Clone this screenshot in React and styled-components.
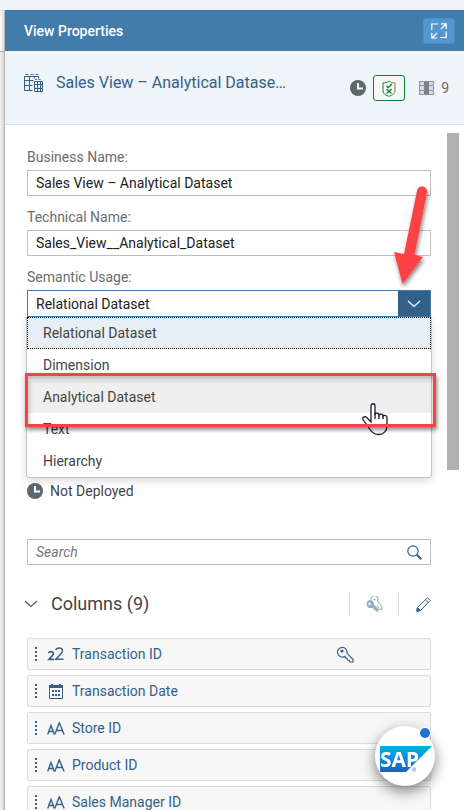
import React from 'react';
import styled, { createGlobalStyle } from 'styled-components';

const GlobalStyle = createGlobalStyle`
  *, *::before, *::after { box-sizing: border-box; }
  body {
    margin: 0;
    background: #eff4f9;
    color: #333;
    font-family: Roboto, "Liberation Sans", sans-serif;
    font-size: 14px;
    line-height: 20px;
  }
  button, input, select { font: inherit; }
  svg { display: block; flex: none; }
`;

const Page = styled.div`
  display: flex;
  height: 100vh;
  padding-top: 10px;
  overflow: hidden;
`;

const CanvasEdge = styled.div`
  flex: 0 0 5px;
  display: flex;
  flex-direction: column;
  background: linear-gradient(to right, #f2f2f2, #d6d6d6);
  border-top: 1px solid #cfe0ee;
  border-right: 1px solid #b4b4b4;
`;

const CanvasToolbar = styled.div`
  height: 41px;
  background: linear-gradient(to right, #fff, #dedede);
  border-bottom: 1px solid #aaa;
`;

const Panel = styled.aside`
  flex: 1;
  min-width: 0;
  display: flex;
  flex-direction: column;
  background: #fff;
`;

const PanelBar = styled.header`
  flex: none;
  display: flex;
  align-items: center;
  justify-content: space-between;
  height: 41px;
  padding: 0 9px 0 19px;
  background: #427cac;
  border-top: 1px solid #3f75a3;
`;

const PanelTitle = styled.h1`
  margin: 0;
  color: #fff;
  font-size: 14px;
  font-weight: 500;
`;

const ExpandButton = styled.button`
  display: grid;
  place-items: center;
  width: 32px;
  height: 26px;
  padding: 0;
  border: 1px solid #4a90cf;
  border-radius: 3px;
  background: #5496cd;
  color: #fff;
`;

const ObjectHeader = styled.section`
  flex: none;
  display: flex;
  align-items: flex-start;
  height: 74px;
  padding: 20px 15px 0 19px;
  background: #eff4f9;
  border-bottom: 1px solid #cfe0ee;
`;

const ObjectTitle = styled.h2`
  flex: 1;
  margin: 0 0 0 13px;
  color: #346187;
  font-size: 16px;
  font-weight: 400;
  line-height: 24px;
  white-space: nowrap;
`;

const ObjectIcon = styled.span`
  padding-top: 3px;
`;

const ObjectMeta = styled.div`
  display: flex;
  align-items: center;
  gap: 7px;
  margin-top: 4px;
`;

const ValidationButton = styled.button`
  display: grid;
  place-items: center;
  width: 32px;
  height: 26px;
  padding: 0;
  border: 1px solid #107e3e;
  border-radius: 3px;
  background: #f7f7f7;
`;

const ColumnCount = styled.span`
  display: flex;
  align-items: center;
  gap: 7px;
  margin-left: 7px;
  color: #6a6d70;
`;

const Body = styled.div`
  flex: 1;
  min-height: 0;
  display: flex;
  padding-right: 5px;
`;

const Content = styled.div`
  flex: 1;
  min-width: 0;
  padding: 22px 16px 0 22px;
`;

const ScrollTrack = styled.div`
  flex: 0 0 12px;
  padding-top: 8px;
`;

const ScrollThumb = styled.div`
  height: 337px;
  background: #b1b1b1;
`;

const Form = styled.form`
  display: flex;
  flex-direction: column;
  gap: 11px;
`;

const Field = styled.div`
  display: flex;
  flex-direction: column;
  gap: 3px;
`;

const Label = styled.label`
  color: #6a6d70;
`;

const TextInput = styled.input`
  width: 100%;
  height: 26px;
  padding: 0 8px;
  border: 1px solid #bfbfbf;
  border-radius: 0;
  background: #fff;
  color: #222;
  outline: none;
  &::placeholder { color: #74777a; font-style: italic; opacity: 1; }
  &::-webkit-search-cancel-button { display: none; }
`;

const SelectBox = styled.div`
  position: relative;
  display: flex;
  height: 27px;
`;

const Select = styled.select`
  appearance: none;
  width: 100%;
  padding: 0 40px 0 8px;
  border: 1px solid #427cac;
  border-radius: 0;
  background: #fff;
  color: #222;
  outline: none;
`;

const SelectArrow = styled.span`
  position: absolute;
  inset: 1px 1px 1px auto;
  display: grid;
  place-items: center;
  width: 32px;
  background: #346187;
  color: #fff;
  pointer-events: none;
`;

const Options = styled.ul`
  position: absolute;
  z-index: 1;
  top: 100%;
  left: -1px;
  right: -1px;
  margin: 0;
  padding: 0;
  list-style: none;
  background: #fff;
  border: 1px solid #c3c3c3;
  border-top: 0;
  border-radius: 0 0 4px 4px;
  box-shadow: 0 3px 8px rgba(0, 0, 0, 0.14);
`;

const Option = styled.li`
  height: 32px;
  padding: 5px 15px;
  border: 1px ${(p) => (p.$selected ? 'dotted #000' : 'solid transparent')};
  background: ${(p) => (p.$selected ? '#e6eef6' : p.$hover ? '#efefef' : 'transparent')};
  color: #444;
`;

const Highlight = styled.div`
  position: absolute;
  z-index: 3;
  top: 83px;
  left: -2px;
  right: -5px;
  height: 54px;
  border: 3px solid #fd4245;
  box-shadow: 1px 3px 4px rgba(0, 0, 0, 0.45), inset 1px 4px 4px rgba(0, 0, 0, 0.25);
`;

const Pointer = styled.span`
  position: absolute;
  z-index: 2;
  top: 112px;
  right: 43px;
`;

const Arrow = styled.span`
  position: absolute;
  z-index: 3;
  top: -106px;
  right: -4px;
  pointer-events: none;
`;

const Status = styled.div`
  display: flex;
  align-items: center;
  gap: 7px;
  margin-top: 164px;
  color: #444;
`;

const SearchBox = styled.form`
  display: flex;
  align-items: center;
  height: 26px;
  margin-top: 38px;
  border: 1px solid #bfbfbf;
`;

const SearchInput = styled(TextInput)`
  flex: 1;
  height: 24px;
  border: 0;
`;

const IconButton = styled.button`
  display: grid;
  place-items: center;
  flex: none;
  width: ${(p) => p.$width || 32}px;
  height: 24px;
  padding: 0;
  border: 0;
  background: transparent;
  color: #346187;
  &:disabled { opacity: 0.5; }
`;

const SectionHeader = styled.div`
  display: flex;
  align-items: center;
  height: 24px;
  margin: 27px 0 22px -5px;
`;

const SectionTitle = styled.h3`
  flex: 1;
  margin: 0 0 0 11px;
  color: #444;
  font-size: 18px;
  font-weight: 400;
  line-height: 24px;
`;

const Tool = styled.span`
  display: flex;
  justify-content: ${(p) => (p.$last ? 'flex-end' : 'center')};
  width: ${(p) => (p.$last ? 33 : 49)}px;
  border-left: 1px solid #d9d9d9;
`;

const ColumnList = styled.ul`
  display: flex;
  flex-direction: column;
  gap: 5px;
  margin: 0;
  padding: 0;
  list-style: none;
`;

const ColumnRow = styled.li`
  display: flex;
  align-items: center;
  height: 32px;
  padding: 0 76px 0 7px;
  border: 1px solid #dcdcdc;
  border-radius: 2px;
  background: #f7f7f7;
  color: #346187;
`;

const TypeIcon = styled.span`
  display: grid;
  place-items: center;
  width: 20px;
  margin: 0 6px 0 8px;
`;

const ColumnName = styled.span`
  flex: 1;
`;

const Badge = styled.button`
  position: fixed;
  z-index: 5;
  right: 29px;
  bottom: 24px;
  width: 60px;
  height: 60px;
  padding: 0;
  border: 0;
  border-radius: 50%;
  background: #fff;
  box-shadow: 0 5px 14px rgba(0, 0, 0, 0.5);
`;

const ClockIcon = () => (
  <svg width="16" height="16" viewBox="0 0 16 16" aria-hidden="true">
    <circle cx="8" cy="8" r="8" fill="#5c676e" />
    <path d="M8 3v5.5h5" fill="none" stroke="#fff" strokeWidth="2" />
  </svg>
);

const ChevronDown = () => (
  <svg width="14" height="8" viewBox="0 0 14 8" fill="none" stroke="currentColor" strokeWidth="1.2" aria-hidden="true">
    <path d="M1 1l6 5.5L13 1" />
  </svg>
);

const ExpandIcon = () => (
  <svg width="16" height="16" viewBox="0 0 16 16" fill="none" stroke="currentColor" strokeWidth="1.2" aria-hidden="true">
    <path d="M7 1H.8v6M15.2 8.5v6H9M10 .8h5.2V6M15 1l-5 5M.8 10v5H6M1 15l5-5" />
  </svg>
);

const ViewIcon = () => (
  <svg width="19" height="19" viewBox="0 0 19 19" fill="none" stroke="#346187" aria-hidden="true">
    <path d="M1.5 .5h3M6.5 .5h3M11.5 .5h3" stroke="#5a6f88" />
    <path d="M.5 2.5h14v2M.5 2.5v14h8M5.500 2.500v14M.5 6.500h9M.5 11.500h8M10.500 2.500v2" />
    <path d="M11 5.500h2M14.500 5.500h2" stroke="#5a6f88" />
    <path d="M10.500 7.500h8v10h-8zM13.500 7.500v10M16.500 7.500v10M10.500 10.500h8M10.500 14.500h8" />
  </svg>
);

const ShieldIcon = () => (
  <svg width="14" height="17" viewBox="0 0 14 17" fill="none" stroke="#107e3e" aria-hidden="true">
    <path d="M7 1C5 2.5 3 3 1 3v8c0 3 3.500 4.500 6 5.300" />
    <path d="M7 1c2 1.500 4 2 6 2v8c0 3-3.500 4.500-6 5.300" stroke="#6b8e23" />
    <path d="M4.500 6l1.700 1.500L9.800 4M4.500 9l5 4.500M9.500 9l-5 4.500" strokeWidth="1.300" />
  </svg>
);

const ColumnsIcon = () => (
  <svg width="15" height="14" viewBox="0 0 15 14" aria-hidden="true">
    <path d="M0 0h15v14H0z" fill="#d5dcea" />
    <path d="M5 0h5v14H5z" fill="#808080" />
    <path d="M.5 .5v13M14.500 .5v13M0 .5h15M0 4.500h5M10 4.500h5M0 9.500h5M10 9.500h5M0 13.500h15" stroke="#8e9196" />
  </svg>
);

const SearchIcon = () => (
  <svg width="15" height="15" viewBox="0 0 15 15" fill="none" stroke="currentColor" aria-hidden="true">
    <circle cx="6" cy="6" r="5.200" strokeWidth="1.200" />
    <path d="M9.800 9.800l4.500 4.500" strokeWidth="2" />
  </svg>
);

const KeyIcon = () => (
  <svg width="17" height="17" viewBox="0 0 17 17" fill="none" stroke="currentColor" strokeWidth="1.200" aria-hidden="true">
    <path d="M10 7.200l6 6.300V16h-2.800l-1-1.600-1.700-.3-.4-1.900-1.800-.3-.3-1.700A4.800 4.800 0 1 1 10 7.200z" />
    <circle cx="5" cy="5" r="1.600" fill="currentColor" stroke="none" />
  </svg>
);

const KeysIcon = () => (
  <svg width="17" height="16" viewBox="0 0 17 16" fill="none" stroke="currentColor" aria-hidden="true">
    <path d="M5 3.500A3.500 3.500 0 1 1 11.500 5l4.500 6v2.500h-2l-3-4" strokeWidth="1.100" />
    <circle cx="8.500" cy="3.500" r="1.100" fill="currentColor" stroke="none" />
    <path fill="currentColor" stroke="none" fillRule="evenodd" d="M4 4a4 4 0 0 1 4 4.500l4.500 4.700V15.500h-2.300l-1-1.500-1.500-.2-.5-1.500-1.700-.3A4 4 0 1 1 4 4zM3.500 6.800a1.200 1.200 0 1 0 .1 2.400 1.200 1.200 0 0 0-.1-2.400z" />
  </svg>
);

const PencilIcon = () => (
  <svg width="15" height="15" viewBox="0 0 15 15" fill="none" stroke="currentColor" aria-hidden="true">
    <path d="M1.500 10.500L11.500 .8l2.700 2.700-9.700 10L.8 14.200zM9.500 2.800l2.700 2.700" />
    <path d="M1.500 10.500l3 3-3.700 .7z" fill="currentColor" />
  </svg>
);

const DragHandle = () => (
  <svg width="3" height="14" viewBox="0 0 3 14" fill="currentColor" aria-hidden="true">
    <path d="M0 0h2v2H0zM0 4h2v2H0zM0 8h2v2H0zM0 12h2v2H0z" />
  </svg>
);

const NumberTypeIcon = () => (
  <svg width="18" height="14" viewBox="0 0 18 14" fill="none" stroke="currentColor" aria-hidden="true">
    <path d="M1.500 6q.8-1.300 2.500-1.300c3 0 2.800 2.600 1.300 4L2 12.300h5" strokeWidth="1.700" />
    <path d="M8.500 3q1-2 3.700-2c4 0 4 3.400 2 5.600l-5.400 5.700h7.700" strokeWidth="1.500" />
  </svg>
);

const TextTypeIcon = () => (
  <svg width="18" height="13" viewBox="0 0 18 13" fill="none" stroke="currentColor" strokeWidth="1.400" aria-hidden="true">
    <path d="M.7 12.500L4 3.500l3.300 9M2 9.500h4" />
    <path d="M7.800 12.500L12.300 .8l4.800 11.700M9.500 8.500h6" />
  </svg>
);

const DateTypeIcon = () => (
  <svg width="14" height="15" viewBox="0 0 14 15" aria-hidden="true">
    <path d="M.5 2h13v12.500H.5z" fill="none" stroke="currentColor" />
    <path d="M0 1h2V0h2v1h6V0h2v1h2v3H0zM3 6h2v2H3zM6 6h2v2H6zM9 6h2v2H9zM3 10h2v2H3zM6 10h2v2H6zM9 10h2v2H9z" fill="currentColor" />
  </svg>
);

const HandIcon = () => (
  <svg width="26" height="34" viewBox="0 0 26 34" aria-hidden="true">
    <path
      d="M9 20V4c0-3 4-3 4 0v8c1-1.500 4-1 4 1 1-1.500 4-1 4 1 1-1 4-.5 4 1v9c0 5-3.500 8.500-8.500 8.500-4 0-6.500-2-8.500-5l-7-10c-1-2 1.500-3.500 3.500-2.200z"
      fill="#fff" stroke="#1c1c2e" strokeWidth="1.300"
    />
    <path d="M13 11v6M17 12v5M21 13v4" stroke="#1c1c2e" strokeWidth="1.300" />
  </svg>
);

const RedArrow = () => (
  <svg width="44" height="108" viewBox="0 0 44 108" aria-hidden="true">
    <defs>
      <filter id="arrowShadow" x="-30%" y="-10%" width="170%" height="130%">
        <feDropShadow dx="1" dy="3" stdDeviation="2" floodOpacity="0.5" />
      </filter>
    </defs>
    <path
      d="M26 7a5 5 0 0 1 10 1L23.500 71l8.500 2-20.500 27L3 68l10 2z"
      fill="#fd4245" filter="url(#arrowShadow)"
    />
  </svg>
);

const SapLogo = () => (
  <svg width="60" height="60" viewBox="0 0 60 60" aria-hidden="true">
    <defs>
      <linearGradient id="sapBlue" x1="0" y1="0" x2="0" y2="1">
        <stop offset="0" stopColor="#00b1eb" />
        <stop offset="1" stopColor="#1d61bf" />
      </linearGradient>
    </defs>
    <path d="M5 20h52L31 46H5z" fill="url(#sapBlue)" />
    <text x="5" y="41" fill="#fff" fontFamily="Noto Sans, sans-serif" fontSize="21" fontWeight="700">
      SAP
      <tspan x="37" y="46" fill="#4a7fc4" fontSize="5">®</tspan>
    </text>
    <circle cx="50" cy="7" r="6" fill="#fff" />
    <circle cx="50" cy="7" r="5" fill="#1e74cf" />
  </svg>
);

const usages = ['Relational Dataset', 'Dimension', 'Analytical Dataset', 'Text', 'Hierarchy'];

const columns = [
  { name: 'Transaction ID', Icon: NumberTypeIcon, isKey: true },
  { name: 'Transaction Date', Icon: DateTypeIcon },
  { name: 'Store ID', Icon: TextTypeIcon },
  { name: 'Product ID', Icon: TextTypeIcon },
  { name: 'Sales Manager ID', Icon: TextTypeIcon },
];

export default function App() {
  return (
    <>
      <GlobalStyle />
      <Page>
        <CanvasEdge>
          <CanvasToolbar />
        </CanvasEdge>
        <Panel>
          <PanelBar>
            <PanelTitle>View Properties</PanelTitle>
            <ExpandButton type="button" aria-label="Expand panel">
              <ExpandIcon />
            </ExpandButton>
          </PanelBar>
          <ObjectHeader>
            <ObjectIcon><ViewIcon /></ObjectIcon>
            <ObjectTitle>Sales View – Analytical Datase…</ObjectTitle>
            <ObjectMeta>
              <ClockIcon />
              <ValidationButton type="button" aria-label="Validation status">
                <ShieldIcon />
              </ValidationButton>
              <ColumnCount><ColumnsIcon />9</ColumnCount>
            </ObjectMeta>
          </ObjectHeader>
          <Body>
            <Content>
              <Form>
                <Field>
                  <Label htmlFor="business-name">Business Name:</Label>
                  <TextInput id="business-name" defaultValue="Sales View – Analytical Dataset" />
                </Field>
                <Field>
                  <Label htmlFor="technical-name">Technical Name:</Label>
                  <TextInput id="technical-name" defaultValue="Sales_View__Analytical_Dataset" />
                </Field>
                <Field>
                  <Label htmlFor="semantic-usage">Semantic Usage:</Label>
                  <SelectBox>
                    <Select id="semantic-usage" defaultValue={usages[0]}>
                      {usages.map((usage) => <option key={usage}>{usage}</option>)}
                    </Select>
                    <SelectArrow><ChevronDown /></SelectArrow>
                    <Options role="listbox" aria-label="Semantic Usage">
                      {usages.map((usage, i) => (
                        <Option key={usage} role="option" aria-selected={i === 0} $selected={i === 0} $hover={i === 2}>
                          {usage}
                        </Option>
                      ))}
                    </Options>
                    <Pointer><HandIcon /></Pointer>
                    <Highlight />
                    <Arrow><RedArrow /></Arrow>
                  </SelectBox>
                </Field>
              </Form>
              <Status><ClockIcon />Not Deployed</Status>
              <SearchBox role="search">
                <SearchInput type="search" placeholder="Search" aria-label="Search" />
                <IconButton type="button" aria-label="Run search"><SearchIcon /></IconButton>
              </SearchBox>
              <SectionHeader>
                <IconButton type="button" aria-label="Collapse columns" $width={18}><ChevronDown /></IconButton>
                <SectionTitle>Columns (9)</SectionTitle>
                <Tool><IconButton type="button" aria-label="Compound key" disabled><KeysIcon /></IconButton></Tool>
                <Tool $last><IconButton type="button" aria-label="Edit columns" $width={16}><PencilIcon /></IconButton></Tool>
              </SectionHeader>
              <ColumnList>
                {columns.map(({ name, Icon, isKey }) => (
                  <ColumnRow key={name}>
                    <DragHandle />
                    <TypeIcon><Icon /></TypeIcon>
                    <ColumnName>{name}</ColumnName>
                    {isKey && <KeyIcon />}
                  </ColumnRow>
                ))}
              </ColumnList>
            </Content>
            <ScrollTrack><ScrollThumb /></ScrollTrack>
          </Body>
        </Panel>
      </Page>
      <Badge type="button" aria-label="SAP assistant"><SapLogo /></Badge>
    </>
  );
}
